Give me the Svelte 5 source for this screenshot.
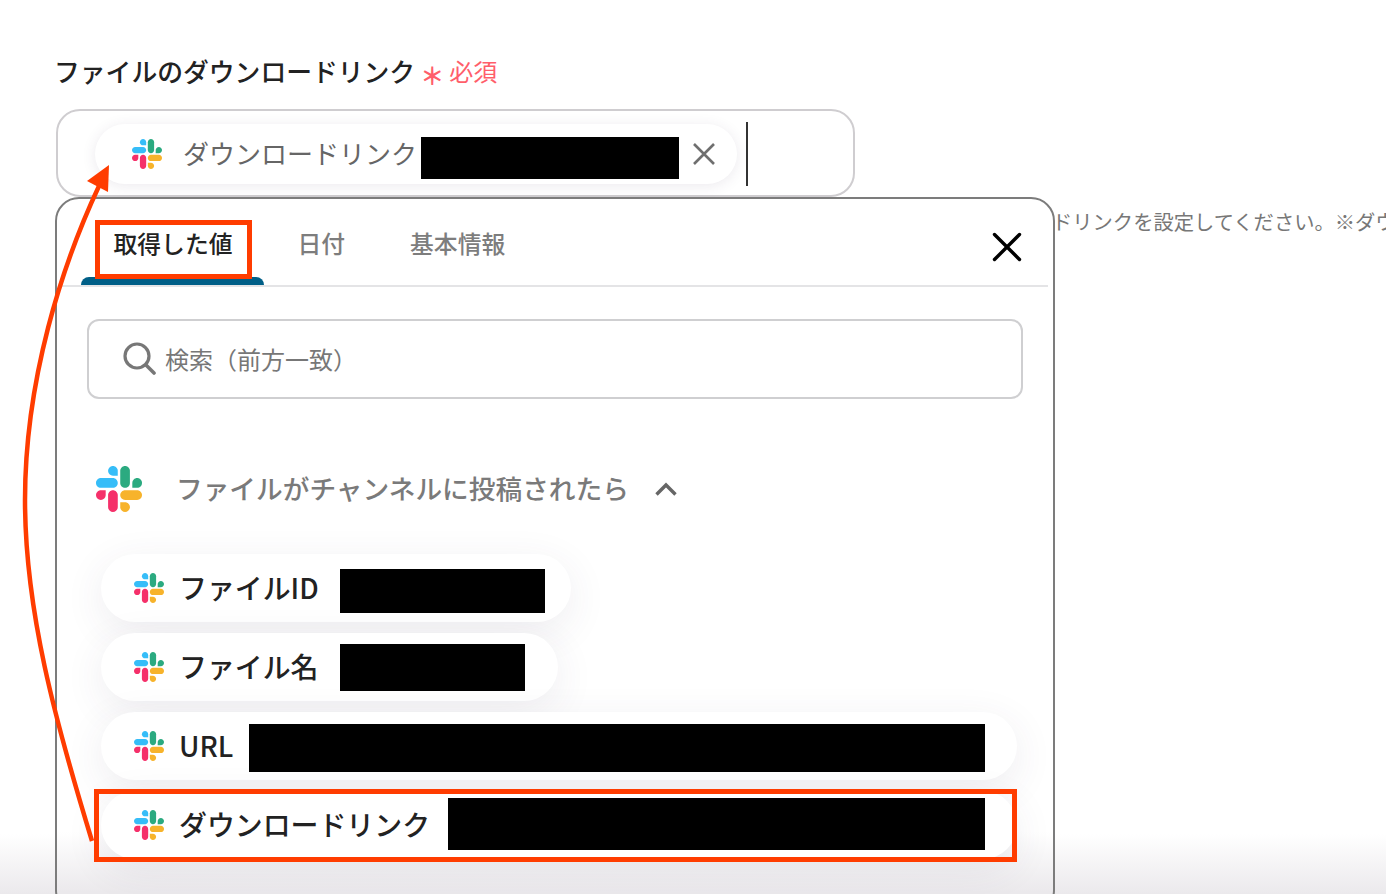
<script>
  const chips = [
    { label: 'ファイルID', w: 205, h: 44, gap: 21, end: 26, dy: 3 },
    { label: 'ファイル名', w: 185, h: 47, gap: 22, end: 33, dy: 0 },
    { label: 'URL', w: 736, h: 48, gap: 16, end: 32, dy: 2 },
    { label: 'ダウンロードリンク', w: 537, h: 52, gap: 18, end: 32, dy: -1 }
  ];
</script>

{#snippet slack(size)}
  <svg width={size} height={size} viewBox="0 0 122.8 122.8" aria-hidden="true" class="slack">
    <path d="M25.8 77.6c0 7.1-5.8 12.9-12.9 12.9S0 84.7 0 77.6s5.8-12.9 12.9-12.9h12.9v12.9z" fill="#f5306a"/>
    <path d="M32.3 77.6c0-7.1 5.8-12.9 12.9-12.9s12.9 5.8 12.9 12.9v32.3c0 7.1-5.8 12.9-12.9 12.9s-12.9-5.8-12.9-12.9V77.6z" fill="#f5306a"/>
    <path d="M45.2 25.8c-7.1 0-12.9-5.8-12.9-12.9S38.1 0 45.2 0s12.9 5.8 12.9 12.9v12.9H45.2z" fill="#36bdf8"/>
    <path d="M45.2 32.3c7.1 0 12.9 5.8 12.9 12.9s-5.8 12.9-12.9 12.9H12.9C5.8 58.1 0 52.3 0 45.2s5.8-12.9 12.9-12.9h32.3z" fill="#36bdf8"/>
    <path d="M97 45.2c0-7.1 5.8-12.9 12.9-12.9s12.9 5.8 12.9 12.9-5.8 12.9-12.9 12.9H97V45.2z" fill="#2baa80"/>
    <path d="M90.5 45.2c0 7.1-5.8 12.9-12.9 12.9s-12.9-5.8-12.9-12.9V12.9C64.7 5.8 70.5 0 77.6 0s12.9 5.8 12.9 12.9v32.3z" fill="#2baa80"/>
    <path d="M77.6 97c7.1 0 12.9 5.8 12.9 12.9s-5.8 12.9-12.9 12.9-12.9-5.8-12.9-12.9V97h12.9z" fill="#f7b32b"/>
    <path d="M77.6 90.5c-7.1 0-12.9-5.8-12.9-12.9s5.8-12.9 12.9-12.9h32.3c7.1 0 12.9 5.8 12.9 12.9s-5.8 12.9-12.9 12.9H77.6z" fill="#f7b32b"/>
  </svg>
{/snippet}

<div class="page">
  <div class="label-row">
    <span class="label">ファイルのダウンロードリンク</span>
    <span class="star">＊</span>
    <span class="req">必須</span>
  </div>

  <div class="field">
    <div class="value-chip">
      {@render slack(30)}
      <span class="value-text">ダウンロードリンク</span>
      <span class="redact value-redact"></span>
      <svg class="chip-x" width="24" height="24" viewBox="0 0 24 24" aria-hidden="true">
        <path d="M2 2L22 22M22 2L2 22" stroke="#6f6f6f" stroke-width="2.6" fill="none"/>
      </svg>
    </div>
    <span class="caret"></span>
  </div>

  <p class="helper">ドリンクを設定してください。※ダウ</p>

  <div class="panel">
    <div class="tabs">
      <div class="tab active">取得した値</div>
      <div class="tab">日付</div>
      <div class="tab">基本情報</div>
      <svg class="close" width="30" height="30" viewBox="0 0 30 30" aria-hidden="true">
        <path d="M2.5 2.5L27.5 27.5M27.5 2.5L2.5 27.5" stroke="#000" stroke-width="3.4" stroke-linecap="round" fill="none"/>
      </svg>
    </div>

    <div class="search">
      <svg width="34" height="34" viewBox="0 0 34 34" aria-hidden="true">
        <circle cx="15" cy="15" r="12" stroke="#777" stroke-width="3.2" fill="none"/>
        <path d="M24 24L32 32" stroke="#777" stroke-width="3.6" stroke-linecap="round"/>
      </svg>
      <span class="placeholder">検索（前方一致）</span>
    </div>

    <div class="section">
      {@render slack(46)}
      <span class="section-title">ファイルがチャンネルに投稿されたら</span>
      <svg class="chev" width="24" height="16" viewBox="0 0 24 16" aria-hidden="true">
        <path d="M2.5 13.5L12 4L21.5 13.5" stroke="#666" stroke-width="3.4" fill="none"/>
      </svg>
    </div>

    <div class="chips">
      {#each chips as c}
        <div class="chip" style="padding-right:{c.end}px">
          {@render slack(30)}
          <span class="chip-text">{c.label}</span>
          <span class="redact" style="width:{c.w}px;height:{c.h}px;margin-left:{c.gap}px;margin-top:{c.dy * 2}px"></span>
        </div>
      {/each}
    </div>
  </div>

  <div class="mark mark-tab"></div>
  <div class="mark mark-chip"></div>
  <svg class="arrow" width="1386" height="894" viewBox="0 0 1386 894" aria-hidden="true">
    <path d="M92 841C55 720 25 610 25 500C25 380 62 265 99 186" stroke="#ff3c00" stroke-width="4.5" fill="none"/>
    <path d="M109 165L87 181L108 192Z" fill="#ff3c00"/>
  </svg>
</div>

<style>
  :global(body) {
    margin: 0;
    background: #fff;
  }
  .page {
    position: relative;
    width: 1386px;
    height: 894px;
    overflow: hidden;
    box-sizing: border-box;
    padding-top: 53px;
    font-family: "Noto Sans CJK JP", "Noto Sans", sans-serif;
    color: #222;
    background: linear-gradient(to bottom, #fff 834px, #ebe9ec 894px);
  }
  .label-row {
    display: flex;
    align-items: center;
    height: 36px;
    margin-left: 54px;
  }
  .label {
    font-size: 25.8px;
    font-weight: 500;
    line-height: 36px;
    color: #222;
  }
  .star {
    margin-left: 5px;
    width: 24px;
    text-align: center;
    font-size: 24px;
    font-weight: 700;
    line-height: 36px;
    height: 36px;
    color: #ff5e6a;
    transform: translateY(4px);
  }
  .req {
    margin-left: 5px;
    font-size: 24px;
    line-height: 36px;
    color: #ff5e6a;
  }
  .field {
    display: flex;
    align-items: center;
    box-sizing: border-box;
    width: 799px;
    height: 88px;
    margin: 20px 0 0 56px;
    padding: 2px 0 0 37px;
    border: 2px solid #cfcdd0;
    border-radius: 24px;
    background: #fff;
  }
  .value-chip {
    display: flex;
    align-items: center;
    box-sizing: border-box;
    width: 642px;
    height: 60px;
    padding: 0 20px 0 37px;
    border-radius: 30px;
    background: #fff;
    box-shadow: 0 2px 14px rgba(70, 50, 90, 0.1);
  }
  .value-text {
    margin-left: 21px;
    padding-bottom: 2px;
    font-size: 26px;
    line-height: 36px;
    color: #666;
    white-space: nowrap;
  }
  .value-redact {
    width: 258px;
    height: 42px;
    margin-left: 4px;
    margin-top: 8px;
  }
  .chip-x {
    margin-left: 13px;
  }
  .caret {
    width: 2px;
    height: 64px;
    margin-left: 9px;
    background: #333;
  }
  .redact {
    display: block;
    flex: none;
    background: #000;
  }
  .slack {
    flex: none;
    display: block;
  }
  .helper {
    margin: 9px 0 0;
    padding-left: 1052px;
    font-size: 20.3px;
    line-height: 30px;
    color: #777;
    white-space: nowrap;
  }
  .panel {
    position: absolute;
    left: 55px;
    top: 197px;
    width: 1000px;
    bottom: -20px;
    box-sizing: border-box;
    border: 2px solid #7c7c7c;
    border-radius: 24px;
    background: linear-gradient(to bottom, #fff calc(100% - 80px), #ebe9ec calc(100% - 20px));
  }
  .tabs {
    position: relative;
    display: flex;
    height: 86px;
    margin: 0 5px 0 3px;
    padding-left: 21px;
    border-bottom: 2px solid #e4e4e6;
  }
  .tab {
    position: relative;
    padding: 0 32.5px;
    font-size: 23.8px;
    font-weight: 500;
    line-height: 88px;
    color: #7d7d7d;
    white-space: nowrap;
  }
  .tab.active {
    color: #222;
  }
  .tab.active::after {
    content: "";
    position: absolute;
    left: 0;
    right: 1px;
    bottom: 0;
    height: 8px;
    border-radius: 8px 8px 0 0;
    background: #005f87;
  }
  .close {
    position: absolute;
    right: 26px;
    top: 33px;
  }
  .search {
    display: flex;
    align-items: center;
    gap: 9px;
    box-sizing: border-box;
    height: 80px;
    margin: 32px 30px 0;
    padding: 0 0 2px 33px;
    border: 2px solid #cfcfd1;
    border-radius: 12px;
  }
  .placeholder {
    font-size: 24px;
    color: #777;
    white-space: nowrap;
  }
  .section {
    display: flex;
    align-items: center;
    height: 46px;
    margin: 67px 0 0 39px;
  }
  .section-title {
    margin-left: 34px;
    padding-bottom: 4px;
    font-size: 26.7px;
    font-weight: 500;
    color: #7a7a7a;
    white-space: nowrap;
  }
  .chev {
    margin-left: 25px;
  }
  .chips {
    display: flex;
    flex-direction: column;
    align-items: flex-start;
    gap: 11px;
    margin: 42px 0 0 44px;
  }
  .chip {
    display: flex;
    align-items: center;
    box-sizing: border-box;
    height: 68px;
    padding-left: 33px;
    border-radius: 34px;
    background: #fff;
    box-shadow: 0 10px 40px rgba(70, 50, 90, 0.09);
  }
  .chip-text {
    margin-left: 15px;
    padding-bottom: 2px;
    font-size: 27.9px;
    font-weight: 500;
    line-height: 36px;
    color: #222;
    white-space: nowrap;
  }
  .mark {
    position: absolute;
    box-sizing: border-box;
    pointer-events: none;
  }
  .mark-tab {
    left: 95px;
    top: 220px;
    width: 157px;
    height: 59px;
    border: 5px solid #ff3c00;
  }
  .mark-chip {
    left: 94px;
    top: 789px;
    width: 923px;
    height: 73px;
    border: 5px solid #ff3c00;
  }
  .arrow {
    position: absolute;
    left: 0;
    top: 0;
    pointer-events: none;
  }
</style>
